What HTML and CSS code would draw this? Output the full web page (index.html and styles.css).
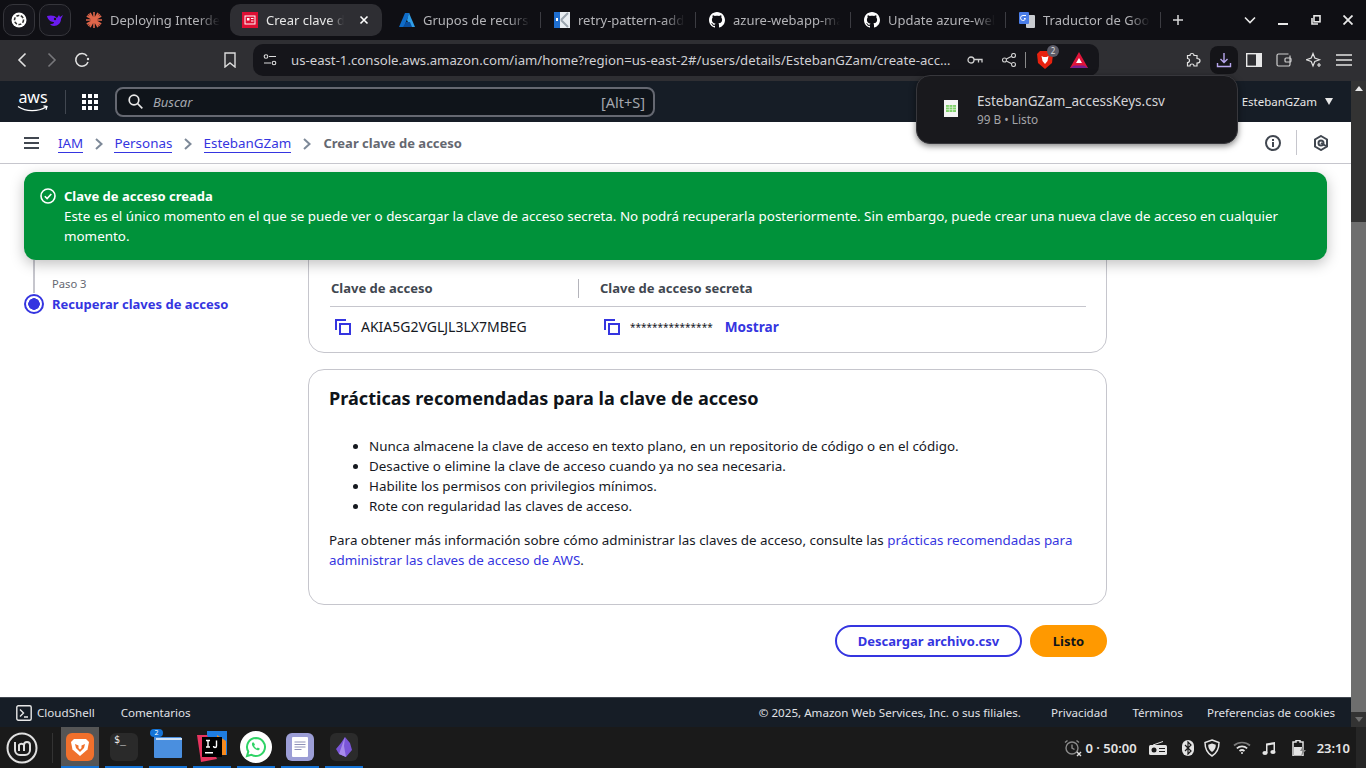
FILE: index.html
```html
<!DOCTYPE html>
<html lang="es">

<head>
    <meta charset="UTF-8">
    <title>Crear clave de acceso</title>
    <link rel="stylesheet" href="styles.css">
</head>

<body>
    <!-- pestañas -->
    <div class="tabstrip">
        <div class="pin">
            <svg width="16" height="16" viewBox="0 0 16 16"><circle cx="8" cy="8" r="7.5" fill="#fff"/><circle cx="8" cy="8" r="4.5" fill="none" stroke="#333" stroke-width="1.6" stroke-dasharray="3 1.5"/></svg>
        </div>
        <div class="pin">
            <svg width="18" height="14" viewBox="0 0 18 14"><path d="M1 3c3-1 8-1 10 2l2-3 1 2 3-2-2 4c0 4-3 7-7 7-2 0-3-1-4-2 2 0 4 0 4-2C6 9 2 8 1 3z" fill="#6a1bf0"/><circle cx="9" cy="6" r="1.2" fill="#16161c"/></svg>
        </div>
        <div class="tab tab-first">
            <svg width="16" height="16" viewBox="0 0 16 16" stroke="#e0664a" stroke-width="1.6"><path d="M8 0v16M0 8h16M2.3 2.3l11.4 11.4M13.7 2.3L2.3 13.7M4 .8l8 14.4M12 .8L4 15.2M.8 4l14.4 8M15.2 4L.8 12"/></svg>
            <span class="tab-title">Deploying Interdep</span>
        </div>
        <div class="tab tab-active">
            <svg width="16" height="16" viewBox="0 0 16 16"><rect width="16" height="16" fill="#dd0f33"/><rect x="3" y="4" width="10" height="8" fill="none" stroke="#fff" stroke-width="1"/><rect x="5" y="6" width="2.5" height="2.5" fill="#fff"/><path d="M9 6.5h2.5M9 9h2.5" stroke="#fff"/></svg>
            <span class="tab-title">Crear clave de</span>
            <svg class="tab-close" width="10" height="10" viewBox="0 0 10 10" stroke="#fff" stroke-width="1.6"><path d="M1.5 1.5l7 7M8.5 1.5l-7 7"/></svg>
        </div>
        <div class="tab">
            <svg width="16" height="16" viewBox="0 0 16 16"><path d="M6 1h4.5L5 15H0z" fill="#0f6cc9"/><path d="M10 1l6 14h-5L8 8z" fill="#2f9ee8"/><path d="M7 10h4l2 5H4z" fill="#0a4fa0"/></svg>
            <span class="tab-title">Grupos de recursos</span>
        </div>
        <div class="tab-sep"></div>
        <div class="tab">
            <svg width="16" height="16" viewBox="0 0 16 16"><rect width="16" height="16" fill="#e8edf2"/><rect width="6" height="16" fill="#1f6fd1"/><path d="M7 8l7-7M7 8l7 7" stroke="#9aa4ae" stroke-width="2"/><rect x="2" y="6" width="2" height="3" fill="#fff"/></svg>
            <span class="tab-title">retry-pattern-addr</span>
        </div>
        <div class="tab-sep"></div>
        <div class="tab">
            <svg width="16" height="16" viewBox="0 0 16 16"><path d="M8 0C3.6 0 0 3.6 0 8c0 3.5 2.3 6.5 5.5 7.6.4.1.5-.2.5-.4v-1.4c-2.2.5-2.7-1-2.7-1-.4-.9-.9-1.2-.9-1.2-.7-.5.1-.5.1-.5.8.1 1.2.8 1.2.8.7 1.2 1.9.9 2.3.7.1-.5.3-.9.5-1.1-1.8-.2-3.6-.9-3.6-4 0-.9.3-1.6.8-2.1-.1-.2-.4-1 .1-2.1 0 0 .7-.2 2.2.8.6-.2 1.3-.3 2-.3s1.4.1 2 .3c1.5-1 2.2-.8 2.2-.8.4 1.1.2 1.9.1 2.1.5.6.8 1.3.8 2.1 0 3.1-1.9 3.7-3.7 3.9.3.3.6.8.6 1.5v2.2c0 .2.1.5.6.4C13.700 14.500 16 11.500 16 8c0-4.400-3.600-8-8-8z" fill="#fff"/></svg>
            <span class="tab-title">azure-webapp-mav</span>
        </div>
        <div class="tab-sep"></div>
        <div class="tab">
            <svg width="16" height="16" viewBox="0 0 16 16"><path d="M8 0C3.6 0 0 3.6 0 8c0 3.5 2.3 6.5 5.5 7.6.4.1.5-.2.5-.4v-1.4c-2.2.5-2.7-1-2.7-1-.4-.9-.9-1.2-.9-1.2-.7-.5.1-.5.1-.5.8.1 1.2.8 1.2.8.7 1.2 1.9.9 2.3.7.1-.5.3-.9.5-1.1-1.8-.2-3.6-.9-3.6-4 0-.9.3-1.6.8-2.1-.1-.2-.4-1 .1-2.1 0 0 .7-.2 2.2.8.6-.2 1.3-.3 2-.3s1.4.1 2 .3c1.5-1 2.2-.8 2.2-.8.4 1.1.2 1.9.1 2.1.5.6.8 1.3.8 2.1 0 3.1-1.9 3.7-3.7 3.9.3.3.6.8.6 1.5v2.2c0 .2.1.5.6.4C13.700 14.500 16 11.500 16 8c0-4.400-3.600-8-8-8z" fill="#fff"/></svg>
            <span class="tab-title">Update azure-web</span>
        </div>
        <div class="tab-sep"></div>
        <div class="tab">
            <svg width="16" height="16" viewBox="0 0 16 16"><rect x="7" y="3" width="9" height="13" rx="1" fill="#c9ccd1"/><rect width="10" height="12" rx="1" fill="#4a7de8"/><path d="M7 3.500H4a2.500 2.500 0 1 0 2.500 3H5" fill="none" stroke="#fff" stroke-width="1"/></svg>
            <span class="tab-title">Traductor de Goog</span>
        </div>
        <div class="tab-sep"></div>
        <svg class="tab-plus" width="12" height="12" viewBox="0 0 12 12" stroke="#d8d8d8" stroke-width="1.500"><path d="M6 1v10M1 6h10"/></svg>
        <div class="win-buttons">
            <svg width="12" height="8" viewBox="0 0 12 8" fill="none" stroke="#e8e8e8" stroke-width="1.600"><path d="M1 1.500l5 5 5-5"/></svg>
            <svg width="10" height="10" viewBox="0 0 10 10" stroke="#e8e8e8" stroke-width="2"><path d="M0 9h10"/></svg>
            <svg width="10" height="10" viewBox="0 0 10 10" fill="none" stroke="#e8e8e8" stroke-width="1.600"><rect x="3" y=".8" width="6" height="6"/><path d="M1 3v6h6"/></svg>
            <svg width="10" height="10" viewBox="0 0 10 10" stroke="#e8e8e8" stroke-width="1.800"><path d="M.5.5l9 9M9.500.5l-9 9"/></svg>
        </div>
    </div>

    <!-- barra de direcciones -->
    <div class="toolbar">
        <div class="nav-buttons">
            <svg width="10" height="16" viewBox="0 0 10 16" fill="none" stroke="#e2e2e2" stroke-width="1.600"><path d="M8.500 1.500L2 8l6.500 6.500"/></svg>
            <svg width="10" height="16" viewBox="0 0 10 16" fill="none" stroke="#77777b" stroke-width="1.600"><path d="M1.500 1.500L8 8l-6.500 6.500"/></svg>
            <svg class="reload" width="16" height="16" viewBox="0 0 16 16" fill="none" stroke="#e2e2e2" stroke-width="1.500"><path d="M14 10a6.300 6.300 0 1 1-1-6"/><circle cx="14" cy="7" r="1.200" fill="#e2e2e2" stroke="none"/></svg>
        </div>
        <svg class="bookmark" width="12" height="16" viewBox="0 0 12 16" fill="none" stroke="#dcdcdc" stroke-width="1.400"><path d="M1 1h10v14l-5-4-5 4z"/></svg>
        <div class="urlbar">
            <svg width="14" height="12" viewBox="0 0 14 12" fill="none" stroke="#dcdcdc" stroke-width="1.100"><circle cx="3" cy="2.500" r="1.800"/><path d="M6 2.500h7M1 9h7"/><circle cx="11" cy="9" r="1.800"/></svg>
            <span class="url">us-east-1.console.aws.amazon.com/iam/home?region=us-east-2#/users/details/EstebanGZam/create-acc…</span>
            <svg class="url-key" width="16" height="10" viewBox="0 0 16 10" fill="none" stroke="#cfcfcf" stroke-width="1.300"><circle cx="4" cy="5" r="3"/><path d="M7 4.500h8v3M11.500 4.500v3"/></svg>
            <svg class="url-share" width="14" height="14" viewBox="0 0 14 14" fill="none" stroke="#cfcfcf" stroke-width="1.100"><circle cx="2.500" cy="7" r="2"/><circle cx="11.500" cy="2.500" r="2"/><circle cx="11.500" cy="11.500" r="2"/><path d="M4.300 6l5.400-2.700M4.300 8l5.400 2.700"/></svg>
            <div class="url-sep"></div>
            <div class="brave-shield">
                <svg width="16" height="18" viewBox="0 0 16 18"><path d="M3 0h10l3 3-1 9-7 6-7-6-1-9z" fill="#e8220f"/><path d="M4.500 5l2 1h3l2-1-1 5-2.500 3-2.500-3z" fill="#fff"/></svg>
                <span class="brave-count">2</span>
            </div>
            <svg class="bat" width="18" height="16" viewBox="0 0 18 16"><path d="M9 0l9 16H0z" fill="#e0153a"/><path d="M0 16l4-2.500h10l4 2.500z" fill="#7a1f8e"/><path d="M9 6l3 5H6z" fill="#fff"/></svg>
        </div>
        <div class="tool-icons">
            <svg class="tool-puzzle" width="16" height="16" viewBox="0 0 16 16" fill="none" stroke="#e2e2e2" stroke-width="1.200"><path d="M6 1.500c1.500 0 2 1 2 2h3v3c1.500 0 3 .5 3 2.200s-1.500 2.300-3 2.300v3H8c0-1.500-1-2-2-2s-2 .5-2 2H1.500v-3.500C3 10.500 3.500 9.500 3.500 8.500S3 6.500 1.500 6.500V3.500H4c0-1 .5-2 2-2z"/></svg>
            <div class="tool-active">
                <svg width="16" height="16" viewBox="0 0 16 16" fill="none" stroke="#b8a7ee" stroke-width="1.400"><path d="M8 1v9M4.500 7L8 10.500 11.500 7M1.500 11v3.500h13V11"/></svg>
            </div>
            <svg width="16" height="14" viewBox="0 0 16 14"><rect x=".7" y=".7" width="14.600" height="12.600" fill="none" stroke="#e8e8e8" stroke-width="1.400"/><rect x="10" y="1" width="5.500" height="12" fill="#e8e8e8"/></svg>
            <svg width="16" height="14" viewBox="0 0 16 14" fill="none" stroke="#d0d0d0" stroke-width="1.200"><path d="M12.500 1h-10A1.500 1.500 0 0 0 1 2.500v9A1.500 1.500 0 0 0 2.500 13h10a1.500 1.500 0 0 0 1.500-1.500v-9"/><rect x="9" y="5" width="6" height="4" rx="1"/></svg>
            <svg width="16" height="16" viewBox="0 0 16 16" fill="none" stroke="#e2e2e2" stroke-width="1.200"><path d="M7 1.500L8.800 6l4.700 1.800L8.800 9.500 7 14 5.200 9.500.5 7.800 5.200 6z"/><path d="M13 11v4M11 13h4"/></svg>
            <svg width="16" height="12" viewBox="0 0 16 12" stroke="#e2e2e2" stroke-width="1.300"><path d="M0 1h16M0 6h16M0 11h16"/></svg>
        </div>
    </div>

    <div class="viewport">
        <div class="page">
            <header class="aws-header">
                <div class="aws-logo">
                    <span class="aws-word">aws</span>
                    <svg width="32" height="8" viewBox="0 0 32 8" fill="none" stroke="#fff" stroke-width="1.300"><path d="M1 1.500c8 5.500 20 5.500 28 .5M26.500.8l3.500.7-1 3.300"/></svg>
                </div>
                <div class="aws-divider"></div>
                <div class="aws-grid"><i></i><i></i><i></i><i></i><i></i><i></i><i></i><i></i><i></i></div>
                <div class="aws-search">
                    <svg width="15" height="15" viewBox="0 0 15 15" fill="none" stroke="#e8e8e8" stroke-width="1.700"><circle cx="6" cy="6" r="4.800"/><path d="M9.500 9.500l4.800 4.800"/></svg>
                    <span class="search-placeholder">Buscar</span>
                    <span class="search-key">[Alt+S]</span>
                </div>
                <div class="aws-user">EstebanGZam<span class="caret"></span></div>
            </header>

            <nav class="crumbs">
                <svg class="hamburger" width="15" height="12" viewBox="0 0 15 12" stroke="#414750" stroke-width="2"><path d="M0 1h15M0 6h15M0 11h15"/></svg>
                <a class="crumb">IAM</a>
                <svg class="chev" width="8" height="12" viewBox="0 0 8 12" fill="none" stroke="#7d8998" stroke-width="2"><path d="M1 1l5.500 5L1 11"/></svg>
                <a class="crumb">Personas</a>
                <svg class="chev" width="8" height="12" viewBox="0 0 8 12" fill="none" stroke="#7d8998" stroke-width="2"><path d="M1 1l5.500 5L1 11"/></svg>
                <a class="crumb">EstebanGZam</a>
                <svg class="chev" width="8" height="12" viewBox="0 0 8 12" fill="none" stroke="#7d8998" stroke-width="2"><path d="M1 1l5.500 5L1 11"/></svg>
                <span class="crumb-current">Crear clave de acceso</span>
                <div class="crumb-tools">
                    <svg width="16" height="16" viewBox="0 0 16 16" fill="none" stroke="#414750" stroke-width="2"><circle cx="8" cy="8" r="7"/><path d="M8 7v5M8 4v2"/></svg>
                    <div class="crumb-sep"></div>
                    <svg width="16" height="16" viewBox="0 0 16 16" fill="none" stroke="#414750" stroke-width="2"><path d="M8 1l6 3.500v7L8 15l-6-3.500v-7z"/><circle cx="8" cy="8" r="2.500"/><path d="M8 8l5 3"/></svg>
                </div>
            </nav>

            <main class="content">
                <aside class="steps">
                    <div class="step-line"></div>
                    <div class="step-label">Paso 3</div>
                    <div class="step-current">
                        <span class="step-dot"></span>
                        <span class="step-name">Recuperar claves de acceso</span>
                    </div>
                </aside>

                <div class="column">
                    <section class="card card-keys">
                        <div class="keys-head">
                            <div class="keys-col1">Clave de acceso</div>
                            <div class="keys-col2">Clave de acceso secreta</div>
                        </div>
                        <div class="keys-row">
                            <div class="keys-col1">
                                <svg class="copy" width="16" height="16" viewBox="0 0 16 16" fill="none" stroke="#3535e0" stroke-width="2"><path d="M1 11V1h10"/><rect x="5" y="5" width="10" height="10"/></svg>
                                <span>AKIA5G2VGLJL3LX7MBEG</span>
                            </div>
                            <div class="keys-col2">
                                <svg class="copy" width="16" height="16" viewBox="0 0 16 16" fill="none" stroke="#3535e0" stroke-width="2"><path d="M1 11V1h10"/><rect x="5" y="5" width="10" height="10"/></svg>
                                <span class="secret">***************</span>
                                <a class="show-link">Mostrar</a>
                            </div>
                        </div>
                    </section>

                    <section class="card card-tips">
                        <h2>Prácticas recomendadas para la clave de acceso</h2>
                        <ul>
                            <li>Nunca almacene la clave de acceso en texto plano, en un repositorio de código o en el código.</li>
                            <li>Desactive o elimine la clave de acceso cuando ya no sea necesaria.</li>
                            <li>Habilite los permisos con privilegios mínimos.</li>
                            <li>Rote con regularidad las claves de acceso.</li>
                        </ul>
                        <p>Para obtener más información sobre cómo administrar las claves de acceso, consulte las <a class="link">prácticas recomendadas para administrar las claves de acceso de AWS</a>.</p>
                    </section>

                    <div class="actions">
                        <button class="btn btn-outline">Descargar archivo.csv</button>
                        <button class="btn btn-primary">Listo</button>
                    </div>
                </div>

                <div class="flash">
                    <svg class="flash-icon" width="16" height="16" viewBox="0 0 16 16" fill="none" stroke="#fff" stroke-width="1.600"><circle cx="8" cy="8" r="7"/><path d="M4.800 8.200l2.300 2.300 4.200-4.500"/></svg>
                    <div>
                        <div class="flash-title">Clave de acceso creada</div>
                        <div class="flash-text">Este es el único momento en el que se puede ver o descargar la clave de acceso secreta. No podrá recuperarla posteriormente. Sin embargo, puede crear una nueva clave de acceso en cualquier momento.</div>
                    </div>
                </div>
            </main>

            <footer class="aws-footer">
                <svg width="16" height="16" viewBox="0 0 16 16" fill="none" stroke="#e8e8e8" stroke-width="1.400"><rect x=".8" y=".8" width="14.400" height="14.400" rx="1.500"/><path d="M4 4.500L7.500 8 4 11.500M8 12h4"/></svg>
                <span class="foot-shell">CloudShell</span>
                <span class="foot-comments">Comentarios</span>
                <span class="foot-copy">© 2025, Amazon Web Services, Inc. o sus filiales.</span>
                <span>Privacidad</span>
                <span>Términos</span>
                <span class="foot-cookies">Preferencias de cookies</span>
            </footer>
        </div>

        <div class="scrollbar">
            <span class="scroll-up"></span>
            <div class="scroll-track"><div class="scroll-thumb"></div></div>
            <span class="scroll-down"></span>
        </div>

        <!-- descargas -->
        <div class="download-pop">
            <svg width="14" height="17" viewBox="0 0 14 17"><rect width="14" height="17" fill="#f4f4f4"/><rect x="2" y="5" width="10" height="7" fill="#7fd06a"/><path d="M2 7.300h10M2 9.600h10M5.300 5v7M8.600 5v7" stroke="#dff3d8" stroke-width=".7"/></svg>
            <div>
                <div class="download-name">EstebanGZam_accessKeys.csv</div>
                <div class="download-status">99 B • Listo</div>
            </div>
        </div>
    </div>

    <!-- panel de Mint -->
    <div class="taskbar">
        <div class="mint-menu">
            <svg width="32" height="32" viewBox="0 0 32 32" fill="none" stroke="#e0e0e0"><circle cx="16" cy="16" r="14.500" stroke-width="2"/><path d="M9 10v8a5 5 0 0 0 5 5h5a5 5 0 0 0 5-5v-5a3 3 0 0 0-6 0v6M18 13a3 3 0 0 0-5 0v6" stroke-width="2"/></svg>
        </div>
        <div class="task-sep"></div>
        <div class="task task-on">
            <svg width="28" height="28" viewBox="0 0 28 28"><rect width="28" height="28" rx="6" fill="#f0702c"/><path d="M8 6h12l3 3-1.500 7.500L14 23l-7.500-6.500L5 9z" fill="#fff"/><path d="M9 11l3.500 1.500v2.500l1.500 1.500 1.500-1.500v-2.500L19 11l-1 4-4 4-4-4z" fill="#f0702c"/></svg>
        </div>
        <div class="task">
            <svg width="28" height="28" viewBox="0 0 28 28"><rect width="28" height="28" rx="6" fill="#2a2a2a"/></svg>
            <span class="term-text">$_</span>
        </div>
        <div class="task">
            <span class="task-badge">2</span>
            <svg width="28" height="22" viewBox="0 0 28 22"><path d="M0 1h27l1 2v18a1 1 0 0 1-1 1H1a1 1 0 0 1-1-1z" fill="#4a8fdf"/><path d="M2 2h26v2H2z" fill="#cfe2f7"/></svg>
        </div>
        <div class="task">
            <svg width="30" height="32" viewBox="0 0 30 32"><path d="M10 0h20v24H20v-8H10z" fill="#1f7de0"/><path d="M20 24h9V10L20 4z" fill="#f68a1e"/><path d="M0 4h10l10 24-16 3z" fill="#e8345f"/><rect x="5" y="6" width="20" height="20" fill="#000"/><rect x="8" y="21" width="8" height="1.500" fill="#fff"/><path d="M9 9.500h4M11 9.500v6.500M9 16h4M19.500 9.500v5.500a1.500 1.500 0 0 1-3 0" stroke="#fff" stroke-width="1.400" fill="none"/></svg>
        </div>
        <div class="task">
            <svg width="32" height="32" viewBox="0 0 32 32"><circle cx="16" cy="16" r="16" fill="#fff"/><path d="M16 7a9 9 0 0 0-7.700 13.600L7 25l4.500-1.200A9 9 0 1 0 16 7z" fill="none" stroke="#2fd366" stroke-width="2"/><path d="M12.500 11.500c-1 1-.7 3 1 5s4 3.500 5.500 2.500l1-1.200-2.200-1.300-1 .9c-1-.4-2.300-1.700-2.700-2.700l.9-1-1.200-2.300z" fill="#2fd366"/></svg>
        </div>
        <div class="task">
            <svg width="28" height="28" viewBox="0 0 28 28"><rect width="28" height="28" rx="6" fill="#9c9ed6"/><rect x="6" y="4" width="16" height="20" rx="1" fill="#fff"/><path d="M8.500 9h11M8.500 11.500h11M8.500 14h11M8.500 16.500h7" stroke="#8f91b8"/></svg>
        </div>
        <div class="task">
            <svg width="28" height="28" viewBox="0 0 28 28"><rect width="28" height="28" rx="6" fill="#2b2b2b"/><path d="M15 4l5 6 2 7-6 7-7-3-3-5 5-6z" fill="#7a55d8"/><path d="M15 4l-1 9 2 11-7-3z" fill="#a78bec"/></svg>
        </div>
        <div class="tray">
            <svg width="18" height="18" viewBox="0 0 18 18" fill="none" stroke="#8a8a8a" stroke-width="1.400"><circle cx="8" cy="9" r="6"/><path d="M8 5.500V9l2.500 1.500M1 3.500L3.500 1.500M15 3.500L12.500 1.500"/><path d="M13 13l4 4M17 13l-4 4" stroke="#e0e0e0"/></svg>
            <span class="tray-timer">0 · 50:00</span>
            <svg class="tray-radio" width="18" height="14" viewBox="0 0 18 14"><rect y="4" width="18" height="10" rx="1.500" fill="#e4e4e4"/><path d="M4 4l10-3.500" stroke="#e4e4e4"/><circle cx="5" cy="9" r="2.500" fill="#1a1a1a"/><path d="M10 7.500h6M10 10.500h6" stroke="#1a1a1a"/></svg>
            <svg class="tray-bt" width="12" height="16" viewBox="0 0 12 16"><rect width="12" height="16" rx="6" fill="#e4e4e4"/><path d="M3 5l6 6-3 3V2l3 3-6 6" fill="none" stroke="#1a1a1a" stroke-width="1.200"/></svg>
            <svg class="tray-shield" width="16" height="18" viewBox="0 0 16 18" fill="none" stroke="#e4e4e4" stroke-width="1.500"><path d="M8 1l7 2.500c0 6-2 10.500-7 13.500C3 14 1 9.500 1 3.500z"/><path d="M8 4.500l3.800 1.200c0 3-1 5.300-3.800 7.300-2.800-2-3.800-4.300-3.800-7.300z" fill="#e4e4e4" stroke="none"/></svg>
            <svg class="tray-wifi" width="18" height="13" viewBox="0 0 18 13" fill="none" stroke-width="1.700"><path d="M1 4.500c4.500-4 11.500-4 16 0" stroke="#7a7a7a"/><path d="M3.800 7.300c3-2.600 7.400-2.600 10.400 0M6.500 10c1.500-1.200 3.500-1.200 5 0" stroke="#e4e4e4"/><circle cx="9" cy="12" r="1" fill="#e4e4e4"/></svg>
            <svg class="tray-music" width="14" height="14" viewBox="0 0 14 14"><path d="M4 2.500L13 1v9.500h-1.500V3.500l-6 1V12H4z" fill="#e4e4e4"/><ellipse cx="3" cy="12" rx="2.600" ry="2" fill="#e4e4e4"/><ellipse cx="11" cy="11" rx="2.600" ry="2" fill="#e4e4e4"/></svg>
            <svg class="tray-batt" width="14" height="16" viewBox="0 0 14 16"><path d="M1 2h3V.5h4V2h3v14H1z" fill="none" stroke="#e4e4e4" stroke-width="1.500"/><path d="M2 7h8v8H2z" fill="#e4e4e4"/><path d="M11 6l-3 5h2.500L9 16l5-6h-2.500z" fill="#8a8a8a"/></svg>
            <span class="tray-clock">23:10</span>
        </div>
        <div class="panel-end"></div>
    </div>
</body>

</html>
```
FILE: styles.css
```css
* {
    box-sizing: border-box;
}

html,
body {
    margin: 0;
    height: 768px;
    overflow: hidden;
}

body {
    display: flex;
    flex-direction: column;
    font-family: "Noto Sans", "Open Sans", sans-serif;
    background: #1a1a1a;
}

svg {
    display: block;
    flex: none;
}

/* pestañas */
.tabstrip {
    height: 40px;
    flex: none;
    display: flex;
    align-items: center;
    padding: 0 0 0 3px;
    background: #0f0f14;
    color: #b4b4b8;
    font-size: 13px;
}

.pin {
    width: 32px;
    height: 32px;
    margin-right: 4px;
    display: flex;
    align-items: center;
    justify-content: center;
    border: 1px solid #35353b;
    border-radius: 10px;
    background: #16161c;
}

.tab {
    width: 154px;
    height: 32px;
    flex: none;
    display: flex;
    align-items: center;
    padding: 0 10px 0 13px;
    gap: 8px;
    border-radius: 10px;
}

.tab-first {
    width: 155px;
    padding-left: 11px;
}

.tab-active {
    width: 152px;
    margin-right: 4px;
    padding-left: 12px;
    background: #2e2e33;
    color: #e8e8e8;
}

.tab-title {
    flex: 1;
    overflow: hidden;
    white-space: nowrap;
    -webkit-mask-image: linear-gradient(to right, #000 80%, transparent);
    mask-image: linear-gradient(to right, #000 80%, transparent);
}

.tab-close {
    margin: 0 3px 0 7px;
}

.tab-sep {
    width: 1px;
    height: 16px;
    flex: none;
    background: #3c3c42;
}

.tab-plus {
    margin-left: 11px;
}

.win-buttons {
    margin-left: auto;
    padding-right: 13px;
    display: flex;
    align-items: center;
    gap: 22.5px;
}

/* barra de direcciones */
.toolbar {
    height: 41px;
    flex: none;
    display: flex;
    align-items: center;
    background: #2f2f33;
    padding-bottom: 1px;
}

.nav-buttons {
    width: 224px;
    padding-left: 17px;
    display: flex;
    align-items: center;
    gap: 20px;
}

.reload {
    margin-left: -3px;
}

.bookmark {
    margin-right: 17px;
}

.urlbar {
    width: 846px;
    height: 32px;
    flex: none;
    display: flex;
    align-items: center;
    padding: 0 11px 0 10px;
    border-radius: 10px;
    background: #15151a;
    color: #d0d0d4;
    font-size: 13.2px;
}

.url {
    margin-left: 14px;
    width: 665px;
    flex: none;
    white-space: nowrap;
    overflow: hidden;
}

.url-key {
    margin-left: 11px;
}

.url-share {
    margin-left: 19px;
}

.url-sep {
    width: 1px;
    height: 16px;
    margin-left: 9px;
    background: #8a8a8a;
}

.brave-shield {
    position: relative;
    margin-left: 11px;
}

.brave-count {
    position: absolute;
    top: -6px;
    left: 10px;
    width: 12px;
    height: 12px;
    border-radius: 50%;
    background: #5c5c68;
    color: #ddd;
    font-size: 8px;
    line-height: 12px;
    text-align: center;
}

.bat {
    margin-left: 17px;
}

.tool-icons {
    margin-left: 87px;
    display: flex;
    align-items: center;
    gap: 14px;
}

.tool-puzzle {
    margin-right: -6px;
}

.tool-active {
    width: 28px;
    height: 28px;
    margin-right: -6px;
    display: flex;
    align-items: center;
    justify-content: center;
    border-radius: 8px;
    background: #141418;
}

/* consola */
.viewport {
    position: relative;
    height: 646px;
    flex: none;
    display: flex;
}

.page {
    flex: 1;
    display: flex;
    flex-direction: column;
    min-width: 0;
    background: #fff;
    color: #16191f;
    font-size: 13.4px;
}

.aws-header {
    height: 41px;
    flex: none;
    display: flex;
    align-items: center;
    padding-left: 17px;
    background: #161d26;
    color: #e8e8e8;
    font-size: 13px;
}

.aws-logo {
    width: 32px;
    display: flex;
    flex-direction: column;
    color: #fff;
}

.aws-word {
    height: 14px;
    font-size: 16px;
    line-height: 13px;
    text-align: center;
}

.aws-divider {
    width: 1px;
    height: 24px;
    margin: 0 16px;
    background: #414750;
}

.aws-grid {
    display: grid;
    grid-template-columns: repeat(3, 4px);
    gap: 2px;
}

.aws-grid i {
    height: 4px;
    background: #fff;
}

.aws-search {
    width: 540px;
    height: 30px;
    margin-left: 17px;
    display: flex;
    align-items: center;
    padding: 0 8px 0 11px;
    border: 2px solid #656871;
    border-radius: 8px;
    background: #0f141a;
}

.search-placeholder {
    margin-left: 10px;
    color: #a3a7ae;
    font-style: italic;
}

.search-key {
    margin-left: auto;
    color: #a3a7ae;
    font-size: 14.5px;
}

.aws-user {
    margin-left: auto;
    padding-right: 18px;
    display: flex;
    align-items: center;
    gap: 8px;
    font-size: 11.5px;
}

.caret {
    border: 4px solid transparent;
    border-top: 7px solid #e8e8e8;
    border-bottom: 0;
}

.crumbs {
    height: 42px;
    flex: none;
    display: flex;
    align-items: center;
    padding: 2px 0 0 24px;
    border-bottom: 1px solid #c6c6cd;
}

.hamburger {
    margin: -2px 19px 0 0;
}

.crumb {
    color: #3535e0;
    border-bottom: 1px solid #3535e0;
    line-height: 17px;
}

.chev {
    margin: 0 11.6px;
}

.crumb-current {
    margin-left: 1px;
    padding-bottom: 2px;
    color: #656871;
    font-size: 13px;
    font-weight: 700;
}

.crumb-tools {
    margin: -2px 0 0 auto;
    padding-right: 22px;
    display: flex;
    align-items: center;
    gap: 16px;
}

.crumb-sep {
    width: 1px;
    height: 25px;
    margin-left: -1px;
    background: #c6c6cd;
}

.content {
    position: relative;
    flex: 1;
    min-height: 0;
    display: flex;
    padding: 0 244px 0 24px;
    overflow: hidden;
}

.steps {
    width: 284px;
    flex: none;
}

.step-line {
    width: 2px;
    height: 33px;
    margin: 96px 0 -17px 9px;
    background: #c6c6cd;
}

.step-label {
    margin-left: 28px;
    color: #656871;
    font-size: 11.2px;
    line-height: 16px;
}

.step-current {
    margin-top: 2px;
    display: flex;
    align-items: center;
    gap: 8px;
}

.step-dot {
    width: 20px;
    height: 20px;
    border: 2px solid #3535e0;
    border-radius: 50%;
    background: radial-gradient(circle, #3535e0 0 5.5px, #fff 6px);
}

.step-name {
    color: #3535e0;
    font-weight: 700;
    font-size: 13px;
}

.column {
    flex: 1;
    min-width: 0;
    margin-top: 36px;
}

.card {
    border: 1px solid #c6c6cd;
    border-radius: 16px;
    background: #fff;
}

.card-keys {
    height: 153px;
    padding: 72px 20px 0 21px;
}

.keys-head {
    display: flex;
    height: 34px;
    align-items: center;
    border-bottom: 1px solid #c6c6cd;
    padding-bottom: 3px;
    color: #414750;
    font-size: 13px;
    font-weight: 700;
}

.keys-head .keys-col1 {
    width: 249px;
    padding-left: 1px;
    border-right: 1px solid #b4b4bb;
    line-height: 19px;
}

.keys-head .keys-col2 {
    padding-left: 21px;
}

.keys-row {
    display: flex;
    height: 39px;
    align-items: center;
    font-size: 14px;
}

.keys-row .keys-col1,
.keys-row .keys-col2 {
    display: flex;
    align-items: center;
}

.keys-row .keys-col1 {
    width: 274px;
    padding-left: 5px;
}

.copy {
    margin-right: 10px;
}

.secret {
    font-size: 10px;
}

.show-link {
    margin-left: 12px;
    color: #3535e0;
    font-size: 13.6px;
    font-weight: 700;
}

.card-tips {
    height: 236px;
    margin-top: 16px;
    padding: 16px 20px 0 20px;
}

.card-tips h2 {
    margin: 0;
    color: #0f141a;
    font-size: 18.1px;
    font-weight: 700;
    line-height: 25px;
}

.card-tips ul {
    margin: 25px 0 0;
    padding-left: 40px;
    line-height: 20px;
}

.card-tips p {
    margin: 14px 0 0;
    line-height: 20px;
}

.link {
    color: #3535e0;
}

.actions {
    margin-top: 20px;
    display: flex;
    justify-content: flex-end;
    gap: 8px;
}

.btn {
    height: 32px;
    border-radius: 16px;
    font-family: inherit;
    font-size: 13px;
    font-weight: 700;
}

.btn-outline {
    width: 187px;
    border: 2px solid #3535e0;
    background: #fff;
    color: #3535e0;
}

.btn-primary {
    width: 77px;
    border: 0;
    background: #ff9900;
    color: #0f141a;
}

.flash {
    position: absolute;
    top: 8px;
    left: 24px;
    right: 24px;
    height: 88px;
    display: flex;
    gap: 8px;
    padding: 14px 40px 0 16px;
    border-radius: 12px;
    background: #00923a;
    color: #fff;
    line-height: 20px;
    box-shadow: 0 4px 14px rgba(0, 0, 0, 0.25);
}

.flash-icon {
    margin-top: 2px;
}

.flash-title {
    font-size: 13px;
    font-weight: 700;
}

.flash-text {
    font-size: 13.4px;
}

.aws-footer {
    height: 30px;
    flex: none;
    display: flex;
    align-items: center;
    padding: 0 16px;
    gap: 25px;
    background: #161d26;
    color: #e0e2e6;
    border-top: 1px solid #414750;
    font-size: 11.6px;
}

.foot-shell {
    margin-left: -20px;
}

.foot-comments {
    margin-left: 1px;
}

.foot-copy {
    margin-left: auto;
    margin-right: 5px;
}

.foot-cookies {
    margin-left: -1px;
}

/* scrollbar */
.scrollbar {
    width: 15px;
    flex: none;
    display: flex;
    flex-direction: column;
    background: #333;
}

.scroll-up,
.scroll-down {
    height: 15px;
    flex: none;
    display: block;
    position: relative;
}

.scroll-up::after,
.scroll-down::after {
    content: "";
    position: absolute;
    left: 4px;
    top: 5px;
    border: 4px solid transparent;
}

.scroll-up::after {
    border-bottom: 5px solid #e8e8e8;
    border-top: 0;
}

.scroll-down::after {
    border-top: 5px solid #6e6e6e;
    border-bottom: 0;
}

.scroll-track {
    flex: 1;
    padding-top: 126px;
}

.scroll-thumb {
    height: 490px;
    background: #6e6e6e;
}

/* descargas */
.download-pop {
    position: absolute;
    top: -6px;
    left: 916px;
    width: 322px;
    height: 69px;
    display: flex;
    align-items: center;
    gap: 19px;
    padding: 0 0 2px 27px;
    border: 1px solid #37373c;
    border-radius: 14px;
    background: #19191d;
    box-shadow: 0 2px 6px rgba(0, 0, 0, 0.5);
    color: #d4d4d8;
}

.download-name {
    font-size: 13.5px;
    line-height: 20px;
}

.download-status {
    font-size: 11.8px;
    color: #a4a4a8;
    line-height: 16px;
}

/* panel */
.taskbar {
    height: 41px;
    flex: none;
    display: flex;
    align-items: center;
    background: #1a1a1a;
    color: #e4e4e4;
    font-size: 13px;
}

.mint-menu {
    width: 52px;
    padding-left: 6px;
}

.task-sep {
    width: 1px;
    height: 30px;
    margin-right: 8px;
    background: #333;
}

.task {
    position: relative;
    width: 38px;
    height: 41px;
    margin-right: 6px;
    display: flex;
    align-items: center;
    justify-content: center;
    border-bottom: 2px solid #1473d6;
}

.task-on {
    background: #555;
}

.term-text {
    position: absolute;
    left: 9px;
    top: 7px;
    color: #eee;
    font-size: 10px;
    font-family: "DejaVu Sans Mono", monospace;
}

.task-badge {
    position: absolute;
    top: 2px;
    left: 1px;
    width: 13px;
    height: 8px;
    border-radius: 4px;
    background: #1473d6;
    color: #fff;
    font-size: 7px;
    line-height: 8px;
    text-align: center;
}

.tray {
    margin-left: auto;
    padding-right: 6px;
    display: flex;
    align-items: center;
}

.tray-timer {
    margin-left: 4px;
    font-weight: 600;
}

.tray-radio {
    margin-left: 12px;
}

.tray-bt {
    margin-left: 15px;
}

.tray-shield {
    margin-left: 10px;
}

.tray-wifi {
    margin-left: 13px;
}

.tray-music {
    margin-left: 11px;
}

.tray-batt {
    margin-left: 16px;
}

.tray-clock {
    margin-left: 11px;
    font-weight: 600;
}

.panel-end {
    width: 10px;
    height: 41px;
    flex: none;
    background: #262626;
}
```
